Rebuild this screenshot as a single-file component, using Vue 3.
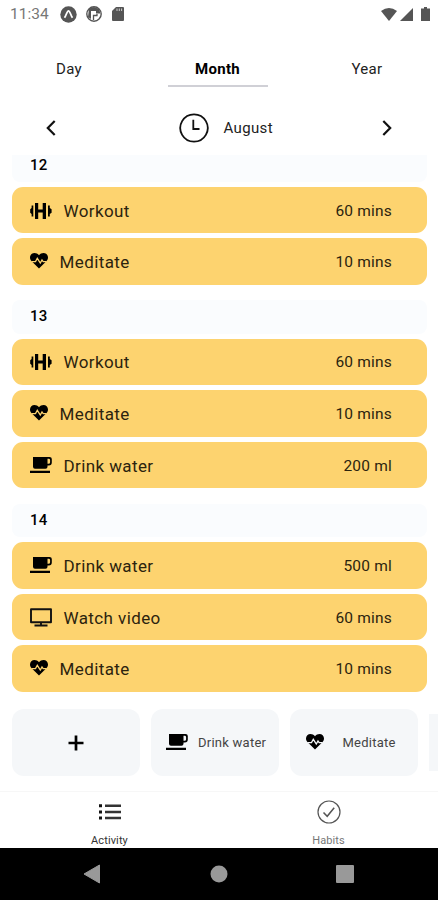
<script setup>
import { h } from 'vue'

const groups = [
  { day: '12', items: [['dumbbell', 'Workout', '60 mins'], ['heart', 'Meditate', '10 mins']] },
  { day: '13', items: [['dumbbell', 'Workout', '60 mins'], ['heart', 'Meditate', '10 mins'], ['cup', 'Drink water', '200 ml']] },
  { day: '14', items: [['cup', 'Drink water', '500 ml'], ['screen', 'Watch video', '60 mins'], ['heart', 'Meditate', '10 mins']] },
]

const heart = 'M9 15.6 1.9 8.4C.5 7 0 5.900 0 4.500 0 2 2 0 4.500 0 6.200 0 7.900.8 9 2.300 10.100.8 11.800 0 13.500 0 16 0 18 2 18 4.500c0 1.400-.5 2.500-1.900 3.900z'
const sizes = { dumbbell: [22, 16], heart: [18, 16], cup: [22, 17], screen: [22, 19] }

function Icon({ name }) {
  const [w, ht] = sizes[name]
  const shapes = {
    dumbbell: [
      h('path', { d: 'M5 0h3.200v6.600h4.500V0H16v16h-3.300V9.400H8.200V16H5zM3.300 2.600v10.800H1.600V11L.2 9.800V6.200L1.600 5V2.600zM18 2.600v10.800h1.800V11L21.600 9.800V6.200L19.800 5V2.600z' }),
    ],
    heart: [
      h('path', { d: heart }),
      h('path', { d: 'M1.500 8.600h4L7.300 5.300l3 4.700 1.700-3 1.200 1.600h3.300', fill: 'none', stroke: '#fdd36f', 'stroke-width': 1.3, class: 'pulse' }),
    ],
    cup: [
      h('path', { d: 'M3 0h16.500q2.300 0 2.300 2v3.500q0 3-3 3H17.500V9.800q0 2-2 2H5q-2 0-2-2zM17.500 1.800v5h1q1.600 0 1.600-1.500V3.200q0-1.400-1.400-1.400zM0 13.800h20v2.200H0z', 'fill-rule': 'evenodd' }),
    ],
    screen: [
      h('path', { d: 'M1 1.200h20v13H1zM11 14v3.500M4.500 17.500h13', fill: 'none', stroke: '#111', 'stroke-width': 1.9, 'stroke-linejoin': 'round' }),
    ],
  }
  return h('svg', { width: w, height: ht, viewBox: `0 0 ${w} ${ht}`, class: 'icon-' + name }, shapes[name])
}
Icon.props = ['name']
</script>

<template>
  <main class="phone">
    <header class="status">
      <span class="time">11:34</span>
      <svg width="17" height="17" viewBox="0 0 17 17"><circle cx="8.500" cy="8.500" r="8.200" fill="#555" /><path d="M4.500 11.800C6.300 9.500 7 4.800 8.500 4.800s2.200 4.700 4 7" fill="none" stroke="#fff" stroke-width="1.800" /></svg>
      <svg width="16" height="16" viewBox="0 0 16 16"><circle cx="8" cy="8" r="7.200" fill="#fff" stroke="#555" stroke-width="1.400" /><path d="M3 2.500 8 1l5 2 1.500 4.500H10V5H5v8L2 11z" fill="#555" /><path d="M7.500 14V9.500h3.500V8" fill="none" stroke="#555" stroke-width="1.300" /></svg>
      <svg class="card-icon" width="12" height="14" viewBox="0 0 12 14"><path d="M4 0h7q1 0 1 1v12q0 1-1 1H1q-1 0-1-1V4z" fill="#555" /><path d="M5 1.500V4M7.300 1.500V4M9.600 1.500V4" stroke="#ccc" stroke-width="1" /></svg>
      <span class="grow"></span>
      <svg width="16" height="13" viewBox="0 0 16 13"><path d="M0 3Q8-3 16 3L8 13z" fill="#555" /></svg>
      <svg class="signal" width="13" height="13" viewBox="0 0 13 13"><path d="M13 0v13H0z" fill="#555" /></svg>
      <svg class="battery" width="9" height="14" viewBox="0 0 9 14"><path d="M3 0h3v1.500h3V14H0V1.500h3z" fill="#555" /></svg>
    </header>

    <nav class="tabs">
      <span class="tab">Day</span>
      <span class="tab active">Month</span>
      <span class="tab">Year</span>
    </nav>

    <section class="picker">
      <svg width="10" height="16" viewBox="0 0 10 16"><path d="M8.700 1 1.800 8l6.900 7" class="chevron" /></svg>
      <div class="month">
        <svg width="30" height="30" viewBox="0 0 30 30"><path d="M15 1.300a13.700 13.700 0 1 0 .01 0zM14.300 6.800v9.200h6.200" fill="none" stroke="#111" stroke-width="1.800" /></svg>
        <span>August</span>
      </div>
      <svg width="10" height="16" viewBox="0 0 10 16"><path d="m1.300 1 6.900 7-6.900 7" class="chevron" /></svg>
    </section>

    <section class="list">
      <div v-for="g in groups" :key="g.day" class="group">
        <div class="day">{{ g.day }}</div>
        <div v-for="it in g.items" :key="it[1]" class="item">
          <Icon :name="it[0]" />
          <span class="label">{{ it[1] }}</span>
          <span class="amount">{{ it[2] }}</span>
        </div>
      </div>
    </section>

    <section class="shortcuts">
      <div class="shortcut add">
        <svg width="16" height="16" viewBox="0 0 16 16"><path d="M8 .5v15M.5 8h15" stroke="#000" stroke-width="2.700" /></svg>
      </div>
      <div class="shortcut"><Icon name="cup" /><span>Drink water</span></div>
      <div class="shortcut wide"><Icon name="heart" /><span>Meditate</span></div>
      <div class="shortcut next"></div>
    </section>

    <nav class="bottom">
      <div class="dest">
        <svg width="24" height="24" viewBox="0 0 24 24"><path d="M1 4.200h3v3H1zM1 10.400h3v3H1zM1 16.600h3v3H1z" fill="#111" /><path d="M7 5.700h16M7 11.900h16M7 18.100h16" stroke="#333" stroke-width="2.500" /></svg>
        <span>Activity</span>
      </div>
      <div class="dest muted">
        <svg width="24" height="24" viewBox="0 0 24 24"><circle cx="12" cy="12" r="11" fill="none" stroke="#555" stroke-width="1.200" /><path d="m6.500 12.500 3.700 3.800 7-8.500" fill="none" stroke="#555" stroke-width="1.500" /></svg>
        <span>Habits</span>
      </div>
    </nav>

    <footer class="system">
      <svg width="18" height="20" viewBox="0 0 18 20"><path d="M1 10 16.500 1v18z" fill="#999" stroke="#999" stroke-linejoin="round" /></svg>
      <svg width="18" height="18" viewBox="0 0 18 18"><circle cx="9" cy="9" r="8.500" fill="#999" /></svg>
      <svg width="18" height="18" viewBox="0 0 18 18"><rect width="18" height="18" rx="1" fill="#999" /></svg>
    </footer>
  </main>
</template>

<style>
body { margin: 0; }
</style>

<style scoped>
.phone { width: 438px; height: 900px; display: flex; flex-direction: column; overflow: hidden; background: #fff; color: #111; font-family: Roboto, "Liberation Sans", sans-serif; }
svg { display: block; flex: none; }
.status { height: 28px; box-sizing: border-box; flex: none; display: flex; align-items: center; padding: 0 8px 0 10px; }
.time { width: 50px; font-size: 15.500px; color: #777; letter-spacing: 0; }
.status svg + svg { margin-left: 8.500px; }
.status .card-icon { margin-left: 10.500px; }
.grow { flex: 1; }
.status .signal { margin-left: 3px; }
.status .battery { margin-left: 8px; }
.tabs { flex: none; height: 59px; padding: 0 21px 0 19px; display: flex; justify-content: space-between; box-sizing: border-box; }
.tab { width: 100px; height: 59px; box-sizing: border-box; padding-top: 31px; line-height: 20px; text-align: center; font-size: 15px; letter-spacing: .3px; border-bottom: 2px solid transparent; color: #222; }
.tab.active { margin-left: -1px; font-size: 15px; font-weight: 700; color: #000; border-color: #d0d0d6; }
.picker { flex: none; height: 66px; box-sizing: border-box; padding: 0 46px 0 46px; display: flex; justify-content: space-between; align-items: flex-start; }
.picker > svg { margin-top: 33px; }
.chevron { fill: none; stroke: #111; stroke-width: 2.200; }
.month { display: flex; align-items: center; gap: 14.500px; margin-top: 26px; margin-left: 14px; font-size: 15px; letter-spacing: .35px; color: #222; }
.list { flex: none; height: 547px; box-sizing: border-box; padding: 0 11px 8.200px 12px; display: flex; flex-direction: column; justify-content: flex-end; gap: 15.400px; }
.group { display: flex; flex-direction: column; gap: 5.200px; }
.day { height: 33.400px; line-height: 33px; background: #fafcfe; border-radius: 8px; padding-left: 18px; font-size: 15px; font-weight: 500; letter-spacing: .2px; color: #000; }
.group:first-child .day { height: 27px; line-height: 20px; border-radius: 0 0 8px 8px; }
.item { height: 46.400px; box-sizing: border-box; display: flex; align-items: center; background: #fdd36f; border-radius: 11px; padding: 1px 35px 0 18px; }
.item .icon-heart { margin-top: -2px; }
.label { margin-left: 11.500px; font-size: 17px; letter-spacing: .4px; color: #2c230e; flex: 1; }
.amount { font-size: 15.500px; letter-spacing: .2px; color: #2c230e; }
.shortcuts { flex: none; height: 91px; box-sizing: border-box; padding: 9px 0 15px 12px; display: flex; gap: 11.500px; overflow: hidden; }
.shortcut { flex: none; width: 127.500px; height: 67px; box-sizing: border-box; border-radius: 12px; background: #f5f7f9; display: flex; align-items: center; padding-left: 14.500px; font-size: 13px; letter-spacing: .25px; color: #444; }
.shortcut span { margin-left: 10.500px; }
.shortcut.add { justify-content: center; padding: 0; }
.shortcut.wide { padding-left: 16px; }
.shortcut.wide span { margin-left: 18.500px; }
.shortcut .icon-heart { margin-top: -1px; }
.shortcut :deep(.pulse) { stroke: #f5f7f9; }
.shortcut.next { height: 57px; margin-top: 5px; border-radius: 0; }
.bottom { flex: none; height: 57px; box-sizing: border-box; border-top: 1px solid #f7f7f7; display: flex; overflow: hidden; }
.dest { width: 219px; display: flex; flex-direction: column; align-items: center; padding-top: 8px; font-size: 11px; letter-spacing: .1px; line-height: 14px; color: #333; }
.dest span { margin-top: 9.500px; }
.dest.muted { color: #777; }
.system { flex: 1; background: #000; display: flex; align-items: center; justify-content: space-between; padding: 0 84px 0 83px; }
</style>
